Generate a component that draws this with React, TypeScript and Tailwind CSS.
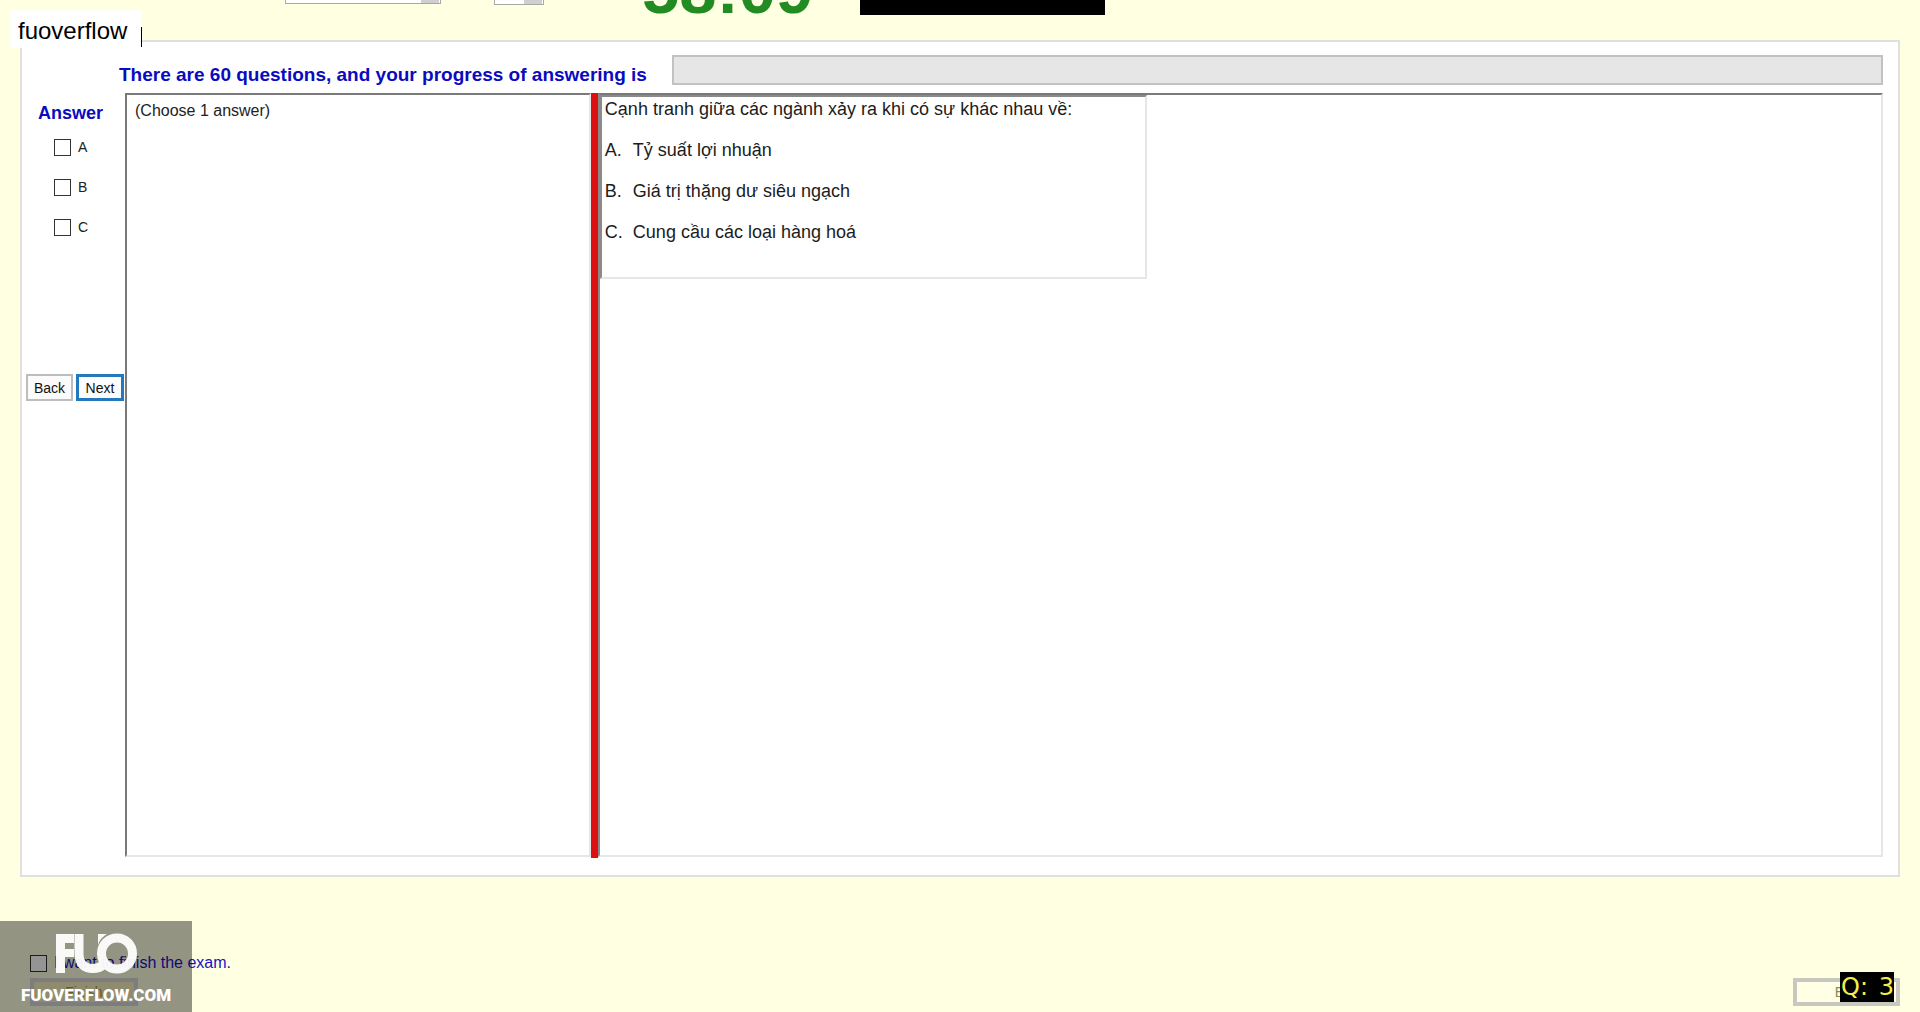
const choices = ["A", "B", "C"];

const options = [
  { letter: "A.", text: "Tỷ suất lợi nhuận" },
  { letter: "B.", text: "Giá trị thặng dư siêu ngạch" },
  { letter: "C.", text: "Cung cầu các loại hàng hoá" },
];

const box = "block size-[17px] shrink-0 appearance-none border border-[#333] bg-white";

function TopBar() {
  return (
    <header className="flex h-10 shrink-0 items-start overflow-hidden pl-[285px]">
      <div className="flex h-1 w-[156px] justify-end border-x border-b border-[#a8a8a8] bg-white pr-px">
        <div className="w-[18px] bg-[#cfcfcf]" />
      </div>
      <div className="ml-[53px] flex h-[5px] w-[50px] justify-end border-x border-b border-[#a8a8a8] bg-white pr-px">
        <div className="w-[18px] bg-[#cfcfcf]" />
      </div>
      <time className="-mt-[47px] ml-[98px] w-[172px] text-[67px] leading-[74px] font-bold text-[#228b22]">
        58:09
      </time>
      <div className="ml-[46px] h-[15px] w-[245px] bg-black" />
    </header>
  );
}

function AnswerColumn() {
  return (
    <aside className="flex w-[103px] shrink-0 flex-col pl-1">
      <h2 className="mt-2 pl-3 text-[18px] leading-6 font-bold text-[#0a0ac0]">Answer</h2>
      <div className="mt-3 flex h-[237px] flex-col gap-5 pl-7">
        {choices.map((c) => (
          <label key={c} className="flex h-5 items-center gap-[7px] text-[14px] leading-4 text-[#222]">
            <input type="checkbox" className={box} />
            {c}
          </label>
        ))}
      </div>
      <div className="flex gap-[3px]">
        <button className="h-[27px] w-[47px] border-2 border-[#bdbdbd] bg-[#fbfbfb] text-[14px] leading-5 text-[#111]">
          Back
        </button>
        <button className="h-[27px] w-[48px] border-3 border-[#2479bd] bg-[#fbfdff] text-[14px] leading-5 text-[#111]">
          Next
        </button>
      </div>
    </aside>
  );
}

function Card() {
  return (
    <main className="mr-5 ml-5 flex min-h-0 flex-1 flex-col border-2 border-[#e0e1dc] bg-white pr-[15px] pb-[17px]">
      <div className="flex h-[51px] shrink-0 items-end pb-2 pl-[97px]">
        <label htmlFor="progress" className="w-[553px] shrink-0 text-[19px] leading-5 font-bold whitespace-nowrap text-[#0a0ac0]">
          There are 60 questions, and your progress of answering is
        </label>
        <div id="progress" role="progressbar" aria-valuenow={0} className="h-[30px] flex-1 border-2 border-[#c2c2c2] bg-[#e6e6e6]" />
      </div>
      <div className="flex min-h-0 flex-1">
        <AnswerColumn />
        <section className="flex min-w-0 flex-1">
          <div className="mb-px w-[26.5%] shrink-0 border-2 border-[#e6e6e6] border-t-[#7a7a7a] border-l-[#7a7a7a] px-2 pt-1 text-[16px] leading-6 text-[#222]">
            (Choose 1 answer)
          </div>
          <div className="w-[7px] shrink-0 bg-[#dc1010]" />
          <div className="mb-px flex-1 border-2 border-[#e6e6e6] border-t-[#7a7a7a] border-l-[#8a8a8a]">
            <div className="h-[184px] w-[42.7%] border-2 border-[#e6e6e6] border-t-[#8a8a8a] border-l-[#8a8a8a] pl-[3px] text-[18px] leading-6 text-[#1c1c1c]">
              <p>Cạnh tranh giữa các ngành xảy ra khi có sự khác nhau về:</p>
              {options.map((o) => (
                <p key={o.letter} className="mt-[17px] flex">
                  <span className="w-7">{o.letter}</span>
                  {o.text}
                </p>
              ))}
            </div>
          </div>
        </section>
      </div>
    </main>
  );
}

function Watermark() {
  return (
    <div className="absolute bottom-0 left-0 flex h-[91px] w-[192px] flex-col items-center bg-black/42 text-white">
      <svg viewBox="0 0 82 42" className="mt-3 h-[42px] w-[82px]" role="img" aria-label="FUO">
        <g fill="none" stroke="#fff" opacity="0.95">
          <path d="M1 1H19V10H10V16H19V24H10V40H1Z" fill="#fff" stroke="none" />
          <path d="M24 1V20Q24 35.5 38 35.5Q44 35.5 48 32" strokeWidth="9" />
          <path d="M43 1H52Q45 5 43 12Z" fill="#fff" stroke="none" />
          <circle cx="62" cy="20.5" r="15.5" strokeWidth="9" />
        </g>
      </svg>
      <div className="mt-2 font-['Roboto',sans-serif] text-[17px] leading-6 font-black">FUOVERFLOW.COM</div>
    </div>
  );
}

export default function App() {
  return (
    <div className="relative flex h-screen flex-col overflow-hidden bg-[#ffffe1] font-['Liberation_Sans',sans-serif]">
      <TopBar />
      <Card />
      <footer className="flex h-[135px] shrink-0 items-end justify-between pr-5 pb-[6px] pl-[30px]">
        <div>
          <label className="flex h-6 items-center gap-[7px] text-[16px] leading-6 text-[#1a12c8]">
            <input type="checkbox" className={box} />
            I want to finish the exam.
          </label>
          <button className="mt-[3px] block h-[28px] w-[108px] border-4 border-[#d8d8d8] bg-[#f4f0c0] text-[14px] leading-5 text-[#a8a040]">
            Finish
          </button>
        </div>
        <button className="h-[28px] w-[107px] border-4 border-[#c8c8c0] bg-[#ffffe6] text-[14px] leading-5 text-[#8a8a50]">
          Exit
        </button>
      </footer>
      <div className="absolute top-[10px] left-[10px] flex h-[38px] w-[132px] items-center bg-white pt-1 pl-2 text-[24px] text-black">
        fuoverflow
        <span className="mt-3 ml-auto h-5 w-px bg-black" />
      </div>
      <div className="absolute right-[26px] bottom-[10px] flex h-[30px] w-[54px] items-center justify-between bg-black pl-px font-['DejaVu_Sans'] text-[24px] text-[#f5ee4a]">
        <span>Q:</span>
        <span>3</span>
      </div>
      <Watermark />
    </div>
  );
}
